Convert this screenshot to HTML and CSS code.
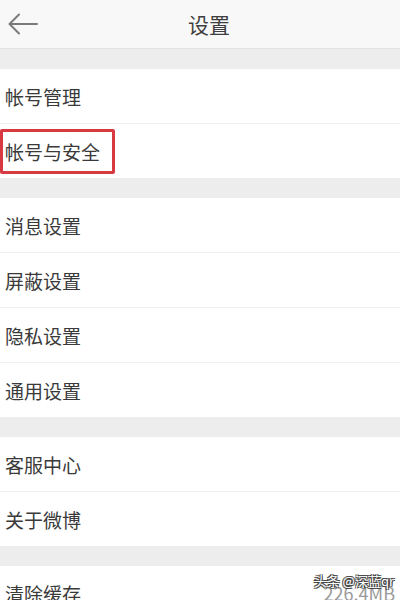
FILE: index.html
```html
<!DOCTYPE html>
<html lang="zh-CN">
<head>
    <meta charset="UTF-8">
    <meta name="viewport" content="width=device-width, initial-scale=1.0">
    <title>设置</title>
    <link rel="stylesheet" href="styles.css">
</head>
<body>
    <div class="header">
        <div class="back">
            <svg width="30" height="22" viewBox="0 0 30 22">
                <path d="M29 11 H2 M11 1.5 L1.5 11 L11 20.5" fill="none" stroke="#7a7a7a" stroke-width="2" stroke-linecap="round" stroke-linejoin="round"/>
            </svg>
        </div>
        <div class="title">设置</div>
    </div>

    <div class="group">
        <div class="row">帐号管理</div>
        <div class="row"><span class="mark">帐号与安全</span></div>
    </div>

    <div class="group">
        <div class="row">消息设置</div>
        <div class="row">屏蔽设置</div>
        <div class="row">隐私设置</div>
        <div class="row">通用设置</div>
    </div>

    <div class="group">
        <div class="row">客服中心</div>
        <div class="row">关于微博</div>
    </div>

    <div class="group">
        <div class="row">清除缓存<span class="value">226.4MB</span></div>
    </div>

    <div class="watermark">头条 @深蓝qr</div>
</body>
</html>
```

FILE: styles.css
```css
body {
    font-family: "Noto Sans CJK SC", "Noto Sans", sans-serif;
    background-color: #ededed;
    margin: 0;
    padding: 0;
    color: #3a3a3a;
    overflow: hidden;
}

.header {
    height: 48px;
    background-color: #f8f8f8;
    border-bottom: 1px solid #e2e2e2;
    display: flex;
    align-items: center;
    justify-content: center;
    position: relative;
}

.back {
    position: absolute;
    left: 8px;
    top: 13px;
    line-height: 0;
}

.title {
    font-size: 21px;
    color: #3f3f3f;
    margin-left: 18px;
}

.group {
    margin-top: 20px;
    background-color: #fff;
}

.row {
    height: 54px;
    display: flex;
    align-items: center;
    justify-content: space-between;
    padding: 0 5px;
    font-size: 19px;
    border-top: 1px solid #f0f0f0;
}

.row:first-child {
    border-top: none;
}

.mark {
    display: inline-block;
    margin-left: -5px;
    height: 39px;
    line-height: 39px;
    padding: 0 12px 0 2px;
    border: 3px solid #d83a42;
    border-radius: 2px;
}

.value {
    color: #9a9a9a;
    font-size: 18px;
}

.watermark {
    position: absolute;
    right: 6px;
    bottom: 10px;
    font-size: 13px;
    color: #fff;
    text-shadow: -1px -1px 0 #444, 1px -1px 0 #444, -1px 1px 0 #444, 1px 1px 0 #444;
}
```
